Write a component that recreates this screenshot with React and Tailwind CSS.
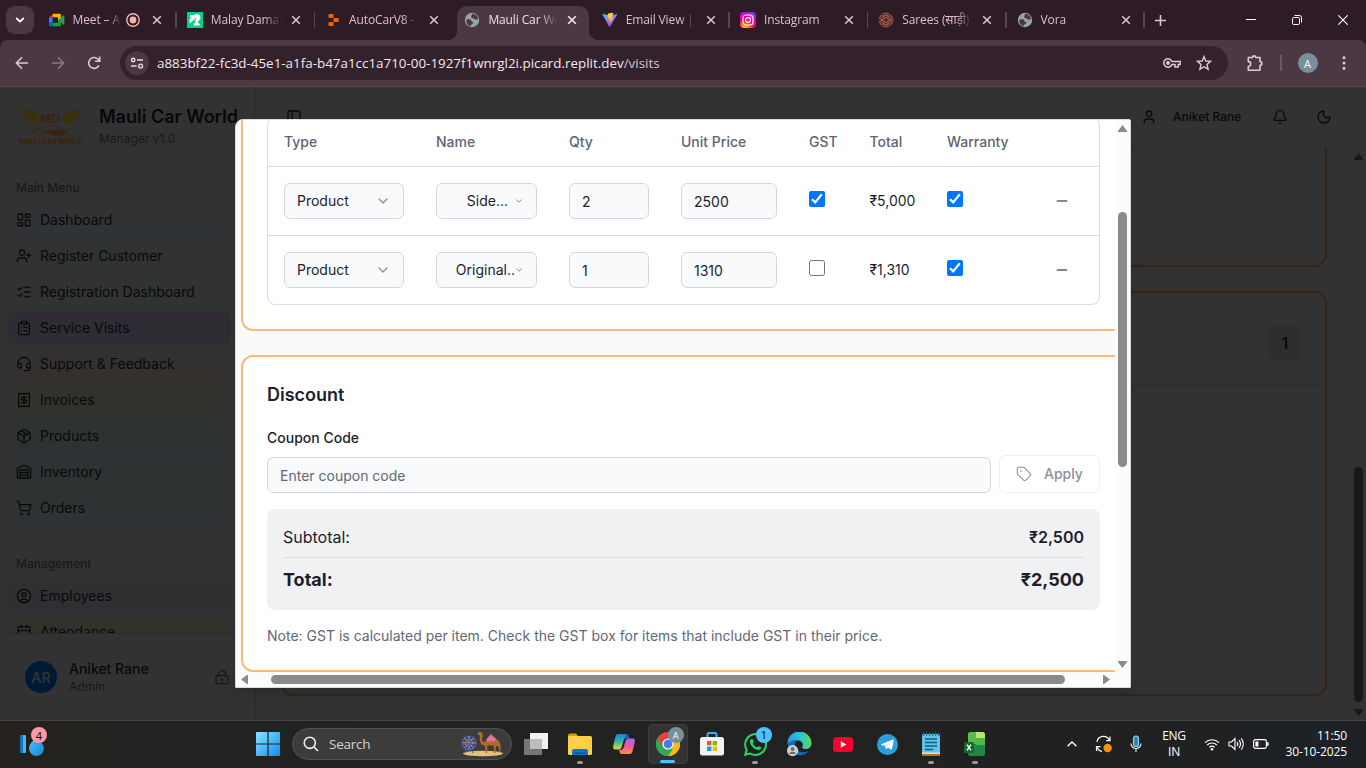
import React from "react";
import {
  LayoutDashboard, UserPlus, ListChecks, ClipboardList, Headset, Receipt, Package, Warehouse,
  ShoppingCart, CircleUser, Calendar, LockKeyhole, PanelLeft, User, Bell, Moon, Tag, ChevronDown, Minus,
} from "lucide-react";

/* ---------- browser chrome ---------- */

const MeetIcon = () => (
  <svg width="16" height="16" viewBox="0 0 16 16">
    <path d="M0 5.5L4 1.8V5.5Z" fill="#ea4335" />
    <path d="M0 5.5H3.6V10.8H0Z" fill="#2684fc" />
    <path d="M0 10.8H3.6V14.2H1.2A1.2 1.2 0 0 1 0 13Z" fill="#0066da" />
    <path d="M4 1.8H10.6A1.2 1.2 0 0 1 11.8 3V6.3L9 8.6V5.3H4Z" fill="#ffba00" />
    <path d="M3.6 10.8H9V8L11.8 10V13A1.2 1.2 0 0 1 10.6 14.2H3.6Z" fill="#00ac47" />
    <path d="M9 8L14.2 3.5C14.9 3 15.4 3.3 15.4 4V12C15.4 12.8 14.8 13 14.2 12.5Z" fill="#2e9e4c" />
  </svg>
);
const MalayIcon = () => (
  <svg width="16" height="16" viewBox="0 0 16 16">
    <rect width="16" height="16" fill="#08cf87" />
    <path d="M3 3H7.4A3.6 3.6 0 1 1 10.4 9.2L13.4 13.6H6.2L8.6 9.4L7 8L2.6 11.4V7.2L5 5.6H3Z" fill="#fff" />
    <path d="M5.2 8.6L8.6 6.2L8.4 9.6" stroke="#08cf87" strokeWidth=".7" fill="none" />
  </svg>
);
const ReplitIcon = () => (
  <svg width="16" height="16" viewBox="0 0 16 16" fill="#f26207">
    <rect x="3.500" y="2" width="5" height="4" rx=".8" />
    <rect x="8.500" y="6" width="5.200" height="4" rx=".8" />
    <rect x="3.500" y="10" width="5" height="4" rx=".8" />
  </svg>
);
const GlobeIcon = () => (
  <svg width="16" height="16" viewBox="0 0 16 16">
    <circle cx="8" cy="8" r="7.2" fill="#9aa3a9" />
    <path d="M2.5 7.2C4 8 4.8 6.9 6.4 7.6C7.6 8.2 7 9.8 8.6 9.9C9.8 10 9.4 11.6 8.2 12C7 12.4 6.8 13.6 6.6 14.2C3.6 13.4 1.8 10.6 2.5 7.2ZM8 1.8C7.2 3 8.2 3.6 7.4 4.6C6.8 5.4 7.6 6.4 9 6.2C10.4 6 10.4 7.6 12 7.6C13.2 7.6 13.6 7 14 7.6C14.2 4.4 11.4 1.8 8 1.8Z" fill="#4b3842" />
  </svg>
);
const ViteIcon = () => (
  <svg width="17" height="16" viewBox="0 0 17 16">
    <defs>
      <linearGradient id="vt" x1="0" y1="0" x2=".6" y2="1"><stop stopColor="#41d1ff" /><stop offset="1" stopColor="#bd34fe" /></linearGradient>
      <linearGradient id="vb" x1="0" y1="0" x2="0" y2="1"><stop stopColor="#ffdd35" /><stop offset="1" stopColor="#ffa800" /></linearGradient>
    </defs>
    <path d="M.3 1.5L8 15.6L16.6 1.5L8.6 3Z" fill="url(#vt)" />
    <path d="M12 .2L6.5 1.2L6 6.5L8 6.2L7.4 9L9 8.6L8.5 11.8L12.2 5.2L10.4 5.5Z" fill="url(#vb)" />
  </svg>
);
const InstaIcon = () => (
  <svg width="16" height="16" viewBox="0 0 16 16">
    <defs>
      <radialGradient id="ig" cx=".3" cy="1.05" r="1.1"><stop stopColor="#ffd600" /><stop offset=".25" stopColor="#ff7a00" /><stop offset=".5" stopColor="#ff0169" /><stop offset=".8" stopColor="#d300c5" /><stop offset="1" stopColor="#7638fa" /></radialGradient>
    </defs>
    <rect width="16" height="16" rx="4" fill="url(#ig)" />
    <rect x="3" y="3" width="10" height="10" rx="3" fill="none" stroke="#fff" strokeWidth="1.2" />
    <circle cx="8" cy="8" r="2.4" fill="none" stroke="#fff" strokeWidth="1.2" />
    <circle cx="10.9" cy="5.1" r=".7" fill="#fff" />
  </svg>
);
const SareeIcon = () => (
  <svg width="17" height="16" viewBox="0 0 16 16" fill="none" stroke="#b05a4c" strokeWidth="1">
    <circle cx="8" cy="8" r="2.1" /><circle cx="8" cy="3.4" r="2" /><circle cx="8" cy="12.6" r="2" />
    <circle cx="4" cy="5.7" r="2" /><circle cx="12" cy="5.7" r="2" /><circle cx="4" cy="10.3" r="2" /><circle cx="12" cy="10.3" r="2" />
    <circle cx="8" cy="8" r="7" strokeDasharray="2 1.2" /><circle cx="8" cy="8" r="4.6" />
  </svg>
);

const Cross = ({ c }) => (
  <svg width="10" height="10" viewBox="0 0 10 10" stroke={c} strokeWidth="1.6"><path d="M1.2 1.2L8.8 8.8M8.8 1.2L1.2 8.8" /></svg>
);

const tabs = [
  { t: "Meet – Aniket", icon: <MeetIcon />, rec: true, sep: true },
  { t: "Malay Damani", icon: <MalayIcon />, sep: true },
  { t: "AutoCarV8 - Replit", icon: <ReplitIcon /> },
  { t: "Mauli Car World", icon: <GlobeIcon />, active: true },
  { t: "Email View |", icon: <ViteIcon />, sep: true },
  { t: "Instagram", icon: <InstaIcon />, sep: true },
  { t: "Sarees (साड़ी) -", icon: <SareeIcon />, sep: true },
  { t: "Vora", icon: <GlobeIcon />, sep: true },
];

function Tab({ tab }) {
  return (
    <div className="relative flex h-full w-[138.3px] shrink-0 items-center pl-[10px]">
      {tab.active && (
        <div className="absolute top-[6px] bottom-0 left-[4px] w-[132px] rounded-t-[10px] bg-[#4b3842]">
          <div className="absolute bottom-0 -left-[10px] size-[10px] bg-[radial-gradient(circle_at_0_0,#2d1b26_10px,#4b3842_10.5px)]" />
          <div className="absolute -right-[10px] bottom-0 size-[10px] bg-[radial-gradient(circle_at_100%_0,#2d1b26_10px,#4b3842_10.5px)]" />
        </div>
      )}
      <div className={`relative flex w-4 shrink-0 justify-center ${tab.active ? "left-px" : ""}`}>{tab.icon}</div>
      <div className={`relative ml-2 shrink-0 overflow-hidden whitespace-nowrap text-[12px] leading-4 tracking-[-0.12px] [mask-image:linear-gradient(90deg,#000_76%,transparent)] ${tab.rec ? "w-[48px]" : "w-[70px]"} ${tab.active ? "pl-px text-[#efdfe8]" : "text-[#dfbfd0]"}`}>
        {tab.t}
      </div>
      {tab.rec && (
        <svg className="ml-[5px] shrink-0" width="14" height="14" viewBox="0 0 14 14"><circle cx="7" cy="7" r="6.2" fill="none" stroke="#f7b4ac" strokeWidth="1.4" /><circle cx="7" cy="7" r="3.4" fill="#f7b4ac" /></svg>
      )}
      <div className={`relative shrink-0 ${tab.rec ? "ml-[12px]" : "ml-[10px]"}`}><Cross c={tab.active ? "#f5e6ee" : "#dfbfd0"} /></div>
      {tab.sep && <div className="ml-auto h-4 w-[1.5px] bg-[#5a4450]" />}
    </div>
  );
}

function TabStrip() {
  return (
    <div className="flex h-10 shrink-0 items-center bg-[#2d1b26] pl-[6px]">
      <div className="mr-[4.5px] flex size-7 shrink-0 items-center justify-center rounded-[9px] bg-[#4b3842]">
        <svg width="10" height="6" viewBox="0 0 10 6" fill="none" stroke="#fff" strokeWidth="1.8"><path d="M1.2 1L5 4.6L8.8 1" /></svg>
      </div>
      {tabs.map((t) => <Tab key={t.t} tab={t} />)}
      <svg className="ml-[10px] shrink-0" width="11" height="11" viewBox="0 0 11 11" stroke="#dfbfd0" strokeWidth="1.6"><path d="M5.5 0V11M0 5.5H11" /></svg>
      <div className="ml-auto flex items-center gap-[36px] pr-[18px]">
        <svg width="10" height="10" viewBox="0 0 10 10" stroke="#fff"><path d="M0 4.5H10" /></svg>
        <svg width="10" height="10" viewBox="0 0 10 10" fill="none" stroke="#fff"><rect x=".5" y="2.5" width="7" height="7" rx="1.2" /><path d="M2.5 .5H7.5A2 2 0 0 1 9.5 2.5V7.5" /></svg>
        <svg width="10" height="10" viewBox="0 0 10 10" stroke="#fff" strokeWidth="1.1"><path d="M.3 .3L9.7 9.7M9.7 .3L.3 9.7" /></svg>
      </div>
    </div>
  );
}

function Toolbar() {
  return (
    <div className="flex h-[47px] shrink-0 items-start bg-[#2d1b26]">
      <div className="flex h-[47px] w-full items-center rounded-t-[8px] border-b border-[#5a474f] bg-[#4b3842] pl-[15px]">
        <svg width="14" height="14" viewBox="0 0 14 14" fill="none" stroke="#e3c6d5" strokeWidth="1.5"><path d="M13 7H1.5M7 1.3L1.4 7L7 12.7" /></svg>
        <svg className="ml-[22px]" width="14" height="14" viewBox="0 0 14 14" fill="none" stroke="#8d7582" strokeWidth="1.5"><path d="M1 7H12.5M7 1.3L12.6 7L7 12.7" /></svg>
        <svg className="ml-[22px]" width="14" height="14" viewBox="0 0 14 14" fill="none" stroke="#e3c6d5" strokeWidth="1.6"><path d="M11.9 9.3A5.4 5.4 0 1 1 11.3 3.6L12.4 4.9M12.7 .6V5.2H8.1" /></svg>
        <div className="ml-[19px] flex h-[34px] w-[1108px] items-center rounded-full bg-[#33212c] pl-[5px]">
          <div className="flex size-6 items-center justify-center rounded-full bg-[#4b3842]">
            <svg width="14" height="14" viewBox="0 0 14 14" fill="none" stroke="#ecdde5" strokeWidth="1.4"><circle cx="3.2" cy="4" r="1.7" /><path d="M7 4H13M1 10H6.6" /><circle cx="10.6" cy="10" r="1.9" /></svg>
          </div>
          <div className="ml-2 w-[520px] whitespace-nowrap text-[13.4px] leading-5 text-[#f3e8ee]">
            a883bf22-fc3d-45e1-a1fa-b47a1cc1a710-00-1927f1wnrgl2i.picard.replit.dev<span className="text-[#d9c7d0]">/visits</span>
          </div>
          <svg className="ml-auto" width="18" height="10" viewBox="0 0 18 10" fill="none" stroke="#dccbd4" strokeWidth="1.5"><path d="M8.9 3.6A4.2 4.2 0 1 0 8.9 6.4H12V9H15.2V6.4H17.2V3.6Z" /><circle cx="5" cy="5" r="1.2" fill="#dccbd4" /></svg>
          <svg className="mr-4 ml-[15px]" width="16" height="16" viewBox="0 0 16 16" fill="none" stroke="#dccbd4" strokeWidth="1.4"><path d="M8 1.6L9.8 6L14.6 6.4L11 9.5L12.1 14.2L8 11.7L3.9 14.2L5 9.5L1.4 6.4L6.2 6Z" /></svg>
        </div>
        <svg className="ml-[18px]" width="18" height="17" viewBox="0 0 18 17" fill="none" stroke="#e3c6d5" strokeWidth="1.6"><path d="M2.300 2.500H6.500A1.300 1.300 0 0 1 9.700 2.500H14V6.600A1.600 1.600 0 0 1 14 10.200V15.200H2.300V11.500A2.400 2.400 0 0 0 2.300 6.600Z" strokeLinejoin="round" /></svg>
        <div className="ml-[16px] h-4 w-[1.5px] bg-[#6e5663]" />
        <div className="ml-4 flex size-5 items-center justify-center rounded-full bg-[#78909c] text-[11px] leading-none text-white">A</div>
        <svg className="ml-[24px]" width="4" height="14" viewBox="0 0 4 14" fill="#e3c6d5"><circle cx="2" cy="1.7" r="1.5" /><circle cx="2" cy="7" r="1.5" /><circle cx="2" cy="12.3" r="1.5" /></svg>
      </div>
    </div>
  );
}

/* ---------- dimmed application ---------- */

const mainMenu = [
  { t: "Dashboard", I: LayoutDashboard, bg: "bg-[#313234]" },
  { t: "Register Customer", I: UserPlus, bg: "bg-[#303331]" },
  { t: "Registration Dashboard", I: ListChecks, bg: "bg-[#303332]" },
  { t: "Service Visits", I: ClipboardList, bg: "bg-[#2f2c33]" },
  { t: "Support & Feedback", I: Headset, bg: "bg-[#33312f]" },
  { t: "Invoices", I: Receipt, bg: "bg-[#33312e]" },
  { t: "Products", I: Package, bg: "bg-[#2e3233]" },
  { t: "Inventory", I: Warehouse, bg: "bg-[#2e3233]" },
  { t: "Orders", I: ShoppingCart, bg: "bg-[#2e3233]" },
];
const management = [
  { t: "Employees", I: CircleUser, bg: "bg-[#303033]" },
  { t: "Attendance", I: Calendar, bg: "bg-[#33312c]" },
];

function MenuGroup({ title, items }) {
  return (
    <div className="flex flex-col p-2">
      <div className="flex h-8 items-center px-2 text-[12px] leading-4 font-medium text-[#17181b]">{title}</div>
      <div className="flex flex-col gap-1">
        {items.map(({ t, I, bg }) => (
          <div key={t} className={`flex h-8 items-center gap-2 rounded-md px-2 text-[14px] leading-5 text-[#08090b] ${bg}`}>
            <I size={16} strokeWidth={1.9} className="shrink-0" />
            <span>{t}</span>
          </div>
        ))}
      </div>
    </div>
  );
}

function Logo() {
  return (
    <svg width="70" height="46" viewBox="0 0 70 46">
      <g fill="#3c2f0a">
        <path d="M1 3C7 9 14 8 20 11C23 13 24 16 23 18C14 16 5 11 1 3Z" />
        <path d="M5 11.500C10 15.500 17 17.500 23 18.700L22 20.500C15 20.500 9 17.500 5 11.500Z" />
        <path d="M10 18.500C14 20.500 18 21.500 22 21.500L21 23.500C16 23.500 13 21.500 10 18.500Z" />
        <path d="M69 3C63 9 56 8 50 11C47 13 46 16 47 18C56 16 65 11 69 3Z" />
        <path d="M65 11.500C60 15.500 53 17.500 47 18.700L48 20.500C55 20.500 61 17.500 65 11.500Z" />
        <path d="M60 18.500C56 20.500 52 21.500 48 21.500L49 23.500C54 23.500 57 21.500 60 18.500Z" />
      </g>
      <path d="M2 5C9 10 16 9.500 22 14.500M68 5C61 10 54 9.500 48 14.500" stroke="#322c1c" strokeWidth=".8" fill="none" />
      <text x="34" y="20.500" textAnchor="middle" fontFamily="Inter, sans-serif" fontSize="12" fontWeight="600" fill="#3a2110" textLength="20">MD</text>
      <path d="M30 29C34 27 44 27 50 29.500L51 32L45 33.500H38C35 31 32 30 30 29Z" fill="#3a220f" />
      <path d="M16 29.500C18 27 24 27 27 25C34 23 42 24 46 27L52 30M16 29.500C22 30 30 29 36 33H46" stroke="#3a220f" strokeWidth=".9" fill="none" />
      <circle cx="24" cy="31.500" r="2.400" fill="none" stroke="#38300f" strokeWidth="1.200" />
      <circle cx="50" cy="31.500" r="2" fill="none" stroke="#38300f" strokeWidth="1.200" />
      <text x="35" y="41.500" textAnchor="middle" fontFamily="Inter, sans-serif" fontSize="7.400" fontWeight="800" fill="#3d220d" textLength="64" lengthAdjust="spacingAndGlyphs">MAULI CAR WORLD</text>
    </svg>
  );
}

function Sidebar() {
  return (
    <div className="flex w-[256px] shrink-0 flex-col border-r border-[#2d2d2e] bg-[#323232]">
      <div className="flex h-[77px] shrink-0 items-start border-b border-[#2c2c2d] pt-[15px] pl-4">
        <Logo />
        <div className="pt-[1px] pl-[13px]">
          <div className="text-[18px] leading-7 font-semibold whitespace-nowrap text-[#07080a]">Mauli Car World</div>
          <div className="text-[12px] leading-4 text-[#17181b]">Manager v1.0</div>
        </div>
      </div>
      <div className="flex min-h-0 flex-1 flex-col overflow-hidden pr-4">
        <MenuGroup title="Main Menu" items={mainMenu} />
        <div className="pt-2"><MenuGroup title="Management" items={management} /></div>
      </div>
      <div className="flex h-[87px] shrink-0 items-center border-t border-[#2c2c2d] pl-[25px]">
        <div className="flex size-8 items-center justify-center rounded-full bg-[#001a36] text-[14px] font-semibold text-[#2f3338]">AR</div>
        <div className="ml-3">
          <div className="text-[14px] leading-5 font-medium text-[#08090b]">Aniket Rane</div>
          <div className="text-[12px] leading-4 text-[#17181b]">Admin</div>
        </div>
        <LockKeyhole size={16} strokeWidth={1.8} className="ml-[65px] text-[#17181b]" />
      </div>
    </div>
  );
}

function AppMain() {
  return (
    <div className="flex min-w-0 flex-1 flex-col bg-[#323232]">
      <div className="flex h-[61px] shrink-0 items-center border-b border-[#2c2c2d] pl-[30px] text-[#08090b]">
        <PanelLeft size={16} />
        <User size={16} className="ml-[839px]" />
        <span className="ml-4 text-[12px] leading-4 font-medium">Aniket Rane</span>
        <div className="ml-auto flex gap-7 pr-[34px]"><Bell size={16} /><Moon size={16} /></div>
      </div>
      <div className="flex min-h-0 flex-1">
        <div className="flex min-w-0 flex-1 flex-col pr-6 pl-[25px]">
          <div className="h-[119px] shrink-0 rounded-b-[12px] border-2 border-t-0 border-[#352316]" />
          <div className="mt-6 flex h-[405px] shrink-0 flex-col rounded-[12px] border-2 border-[#352316]">
            <div className="flex h-[93px] shrink-0 items-center justify-end border-b border-[#2b2b2c] pt-2 pr-6">
              <div className="flex h-[34px] w-[33px] items-center justify-center rounded-md bg-[#2e2e2f] pl-px text-[16px] font-semibold text-[#08090d]">1</div>
            </div>
          </div>
        </div>
        <div className="flex w-[15px] shrink-0 flex-col items-center pt-[5px]">
          <svg width="9" height="7" viewBox="0 0 9 7" fill="#191919"><path d="M4.5 0L9 6V7H0V6Z" /></svg>
          <div className="mt-[307px] h-[235px] w-[9px] rounded-full bg-[#191919]" />
          <svg className="mt-[7px]" width="9" height="7" viewBox="0 0 9 7" fill="#191919"><path d="M4.5 7L9 1V0H0V1Z" /></svg>
        </div>
      </div>
    </div>
  );
}

/* ---------- dialog ---------- */

const cols = "grid grid-cols-[152px_133px_112px_128px_60.5px_77.5px_1fr_76px]";

function Check({ on }) {
  return on ? (
    <div className="mb-1 flex size-4 items-center justify-center rounded-[2px] bg-[#0075ff]">
      <svg width="16" height="16" viewBox="0 0 16 16" fill="none" stroke="#fff" strokeWidth="2.2"><path d="M3 8.3L6.2 11.4L12.8 3.2" /></svg>
    </div>
  ) : (
    <div className="mb-1 size-4 rounded-[2.5px] border border-[#767676] bg-white" />
  );
}

const field = "flex h-9 items-center rounded-md border border-[#d5d7dc] bg-[#f9fafb] leading-5";

function Row({ name, qty, price, gst, total, border, tight }) {
  return (
    <div className={`${cols} items-center ${border ? "h-[69px] border-b border-[#dcdde0]" : "h-[68px]"}`}>
      <div className="pl-4"><div className={`${field} w-[120px] justify-between px-3`}>Product<ChevronDown size={16} strokeWidth={1.9} className="text-[#8b8d92]" /></div></div>
      <div className="pl-4">
        <div className={`${field} w-[101px] justify-end pr-3 whitespace-nowrap`}>
          {name}<ChevronDown size={10} strokeWidth={2.4} className={`text-[#8b8d92] ${tight ? "-ml-px" : "ml-[6px]"}`} />
        </div>
      </div>
      <div className="pl-4"><div className={`${field} w-20 px-3 pt-px`}>{qty}</div></div>
      <div className="pl-4"><div className={`${field} w-24 px-3 pt-px`}>{price}</div></div>
      <div className="pl-4"><Check on={gst} /></div>
      <div className="pl-4">{total}</div>
      <div className="pl-4"><Check on /></div>
      <div className="flex pl-[31px]"><Minus size={16} strokeWidth={2.4} className="text-[#606268]" /></div>
    </div>
  );
}

function Dialog() {
  return (
    <div className="absolute top-8 left-[235px] flex h-[569px] w-[896px] flex-col overflow-hidden rounded-tl-[8px] rounded-tr-[2px] rounded-b-[1px] border border-[#d9dadd] bg-[#f8fafc] text-[#1c1f2b] shadow-lg">
      <div className="flex min-h-0 flex-1">
        <div className="flex min-w-0 flex-1 flex-col justify-end overflow-hidden pl-[5px]">
          <div className="w-[885px] shrink-0 rounded-[12px] border-2 border-[#fdba74] bg-white p-6">
            <div className="overflow-hidden rounded-lg border border-[#dcdde0] text-[14px] leading-5">
              <div className={`${cols} h-[49px] items-center border-b border-[#dcdde0] font-medium text-[#5f6472] [&>div]:pl-4`}>
                <div>Type</div><div>Name</div><div>Qty</div><div>Unit Price</div><div>GST</div><div>Total</div><div>Warranty</div><div />
              </div>
              <Row name="Side..." qty="2" price="2500" gst total="₹5,000" border />
              <Row name="Original.." qty="1" price="1310" total="₹1,310" tight />
            </div>
          </div>
          <div className="mt-6 w-[885px] shrink-0 rounded-[12px] border-2 border-[#fdba74] bg-white p-6">
            <div className="text-[18px] leading-7 font-semibold">Discount</div>
            <div className="mt-[19px] text-[14px] leading-5 font-medium">Coupon Code</div>
            <div className="mt-[7px] flex items-end gap-2">
              <div className={`${field} flex-1 px-3 pt-px text-[14px] text-[#626775]`}>Enter coupon code</div>
              <div className="flex h-[38px] w-[101px] items-center rounded-md border border-[#f0f0f1] pl-4 text-[14px] leading-5 font-medium text-[#8f9095]">
                <Tag size={16} strokeWidth={1.6} /><span className="ml-3">Apply</span>
              </div>
            </div>
            <div className="mt-4 rounded-lg bg-[#f0f1f3] p-4">
              <div className="flex justify-between pb-2 text-[16px] leading-6"><span>Subtotal:</span><span className="font-semibold">₹2,500</span></div>
              <div className="flex justify-between border-t border-[#dcdde0] pt-2 text-[18px] leading-7 font-bold"><span>Total:</span><span>₹2,500</span></div>
            </div>
            <div className="mt-4 text-[14px] leading-5 text-[#626775]">Note: GST is calculated per item. Check the GST box for items that include GST in their price.</div>
          </div>
        </div>
        <div className="flex w-[15px] shrink-0 flex-col items-center bg-[#fcfcfc] pt-[5px]">
          <svg width="9" height="7" viewBox="0 0 9 7" fill="#8b8b8b"><path d="M4.5 0L9 6V7H0V6Z" /></svg>
          <div className="mt-20 h-[255px] w-[9px] rounded-full bg-[#8b8b8b]" />
          <svg className="mt-auto mb-1" width="9" height="7" viewBox="0 0 9 7" fill="#8b8b8b"><path d="M4.5 7L9 1V0H0V1Z" /></svg>
        </div>
      </div>
      <div className="flex h-[15px] shrink-0 items-center bg-[#fcfcfc] pl-[5px]">
        <svg width="7" height="9" viewBox="0 0 7 9" fill="#8b8b8b"><path d="M0 4.5L6 0H7V9H6Z" /></svg>
        <div className="ml-[23px] h-[9px] w-[794px] rounded-full bg-[#8b8b8b]" />
        <svg className="ml-[38px]" width="7" height="9" viewBox="0 0 7 9" fill="#8b8b8b"><path d="M7 4.5L1 0H0V9H1Z" /></svg>
      </div>
    </div>
  );
}

/* ---------- taskbar ---------- */

const Cell = ({ children, dot, on }) => (
  <div className="relative flex h-10 w-[43.9px] shrink-0 items-center justify-center">
    {on && <div className="absolute inset-x-[2px] inset-y-0 rounded-[4px] border border-[#3c3b3a] bg-[#343332]" />}
    <div className="relative">{children}</div>
    {dot && <div className="absolute bottom-0 h-[3px] w-[6px] rounded-full bg-[#9a9a9a]" />}
    {on && <div className="absolute bottom-[1px] h-[3px] w-[15px] rounded-full bg-[#4cc2ff]" />}
  </div>
);

function Taskbar() {
  return (
    <div className="flex h-12 shrink-0 items-center border-t border-[#454443] bg-[linear-gradient(90deg,#25221c,#222222_12%,#212121_80%,#1d2126)] pb-px text-white">
      <div className="w-[235px] shrink-0 pl-[19px]">
        <div className="relative h-[34px] w-7">
          <svg width="28" height="34" viewBox="0 0 28 34">
            <defs><linearGradient id="th" x1="0" y1="0" x2="1" y2="1"><stop stopColor="#52c6f7" /><stop offset="1" stopColor="#0f86d8" /></linearGradient></defs>
            <rect x="1" y="8" width="6" height="18" rx="1" fill="#43b8f5" /><rect x="1" y="8" width="3" height="18" fill="#1273b8" />
            <path d="M17 10C20 14 25 17 25 21.500A7.500 7.500 0 0 1 10 21.500C10 17 14 14 17 10Z" fill="url(#th)" />
          </svg>
          <div className="absolute top-0 left-[12px] flex size-4 items-center justify-center rounded-full bg-[#ff99a4] text-[11px] leading-none text-black">4</div>
        </div>
      </div>
      <svg className="ml-[20.5px] shrink-0" width="24" height="24" viewBox="0 0 24 24">
        <defs><linearGradient id="win" x1="0" y1="0" x2="1" y2="1"><stop stopColor="#8be3ff" /><stop offset="1" stopColor="#0a8ef0" /></linearGradient></defs>
        <path d="M0 1A1 1 0 0 1 1 0H11.4V11.4H0ZM12.6 0H23A1 1 0 0 1 24 1V11.4H12.6ZM0 12.6H11.4V24H1A1 1 0 0 1 0 23ZM12.6 12.6H24V23A1 1 0 0 1 23 24H12.6Z" fill="url(#win)" />
      </svg>
      <div className="ml-[12.5px] flex h-8 w-[220px] shrink-0 items-center rounded-full border border-[#535251] bg-[#3d3c3b] pl-[10px]">
        <svg width="16" height="16" viewBox="0 0 16 16" fill="none" stroke="#f0f0f0" strokeWidth="1.6"><circle cx="6.8" cy="6.8" r="5.6" /><path d="M10.8 10.8L15 15" /></svg>
        <span className="ml-[10px] text-[13.5px] leading-5 tracking-[-0.25px] text-[#d2d2d2]">Search</span>
        <svg className="mr-[7px] ml-auto" width="43" height="26" viewBox="0 0 43 26">
          <ellipse cx="22" cy="22.5" rx="20" ry="2.8" fill="#e7c078" />
          <g fill="none"><circle cx="8" cy="12" r="6.6" stroke="#4a6fd0" strokeWidth="2" strokeDasharray="1.6 1" /><circle cx="8" cy="12" r="3.8" stroke="#e85a6c" strokeWidth="1.8" strokeDasharray="1.4 1" /><path d="M8 5V19M1 12H15M3 7L13 17M13 7L3 17" stroke="#7fb1ee" strokeWidth=".7" /><path d="M8 12L4 22M8 12L12 22" stroke="#3d5bb0" /></g>
          <path d="M16.5 3.5L18 .8L21 1.5L21.600 4L21 10L24 11L26.500 7L30 3.500L34 7L38 10L39.500 14V21L38.500 22L37.500 15.500L35 14.800L34.400 22H33.200L32.600 14.500L26.500 14.500L26 22H24.600L24 15L20 13L18.700 9L18.800 4.500Z" fill="#b06a2c" />
          <path d="M25.5 8L30 3.200L35 8L33 10.500H26.500Z" fill="#e2718a" /><path d="M26 8.500L34.500 8.500" stroke="#58c4c4" />
        </svg>
      </div>
      <div className="ml-[2px] flex shrink-0">
        <Cell><svg width="24" height="23" viewBox="0 0 24 23"><rect x="6" y="0" width="18" height="16" fill="#f2f2f2" /><rect x="0" y="6" width="18" height="16" fill="#858585" opacity=".85" /><rect x="6" y="6" width="12" height="10" fill="#bdbdbd" /></svg></Cell>
        <Cell dot><svg width="26" height="24" viewBox="0 0 26 24"><path d="M1 3.5A2 2 0 0 1 3 1.5H9L11 4V7H1Z" fill="#d99a06" /><rect x="1" y="4" width="24" height="19" rx="1.5" fill="#ffcf48" /><path d="M5 23V19A2 2 0 0 1 7 17H19A2 2 0 0 1 21 19V23Z" fill="#1173c6" /><rect x="8" y="20.5" width="10" height="1.4" fill="#0a4f94" /></svg></Cell>
        <Cell><svg width="24" height="22" viewBox="0 0 24 22">
          <defs><linearGradient id="cp1" x1="0" y1="0" x2="0" y2="1"><stop stopColor="#1b7fe0" /><stop offset=".5" stopColor="#2bbd9b" /><stop offset="1" stopColor="#f4cf3a" /></linearGradient><linearGradient id="cp2" x1="0" y1="0" x2="0" y2="1"><stop stopColor="#9a6bf5" /><stop offset=".5" stopColor="#ee5a9a" /><stop offset="1" stopColor="#ff8a4a" /></linearGradient></defs>
          <path d="M6 1H14C16 1 16.6 3 17 5H14C12.5 5 12 6 11.6 7.4L9.8 14C9.3 15.6 8.4 16.4 6.6 16.4H3C1 16.4 .8 14 1.4 12L3.4 4C4 2 4.6 1 6 1Z" fill="url(#cp1)" />
          <path d="M18 21H10C8 21 7.4 19 7 17C9 17 11 16.4 11.6 14.4L13.6 7.6C14.2 5.8 15 5.4 17 5.4H21C23 5.4 23.2 8 22.6 10L20.6 18C20 20 19.4 21 18 21Z" fill="url(#cp2)" />
          <path d="M14 1C16 1 16.6 3 17 5.4H14.4C13 5.4 12.4 6 12 7.4Z" fill="#2456c8" />
        </svg></Cell>
        <Cell on>
          <svg width="24" height="24" viewBox="0 0 24 24"><path d="M12 12L1.6 6A12 12 0 0 1 22.4 6Z" fill="#e94235" /><path d="M12 12L22.4 6A12 12 0 0 1 12 24Z" fill="#fbbc04" /><path d="M12 12V24A12 12 0 0 1 1.6 6Z" fill="#34a853" /><path d="M6.8 15L1.6 6H12V12Z" fill="#e94235" /><path d="M12 6.6H22.7A12 12 0 0 1 12 24L17.2 15Z" fill="#fbbc04" /><path d="M12 17.4L17 15L12 24L6 15Z" fill="#34a853" /><path d="M1.6 6L6.9 15L10 17H16.8L12 24A12 12 0 0 1 1.6 6Z" fill="#34a853" /><circle cx="12" cy="12" r="5.6" fill="#fff" /><circle cx="12" cy="12" r="4.4" fill="#3f7ff0" /></svg>
          <div className="absolute -top-[5px] -right-[4px] flex size-4 items-center justify-center rounded-full bg-[#78909c] text-[9px] leading-none">A</div>
        </Cell>
        <Cell><svg width="24" height="24" viewBox="0 0 24 24"><path d="M7.5 6V2.5A1.5 1.5 0 0 1 9 1H15A1.5 1.5 0 0 1 16.5 2.5V6" fill="none" stroke="#35b3ee" strokeWidth="2" /><rect x="0" y="5" width="24" height="18.5" rx="2.5" fill="#f3f3f3" /><path d="M7 9H11.4V13.4H7Z" fill="#f35325" /><path d="M12.6 9H17V13.4H12.6Z" fill="#81bc06" /><path d="M7 14.6H11.4V19H7Z" fill="#05a6f0" /><path d="M12.6 14.6H17V19H12.6Z" fill="#ffba08" /></svg></Cell>
        <Cell dot>
          <svg width="25" height="25" viewBox="0 0 24 24" fill="#25d366"><path d="M12 1A11 11 0 0 0 2.4 17.3L.8 23.2L6.8 21.7A11 11 0 1 0 12 1ZM12 3A9 9 0 1 1 7.2 19.6L3.6 20.5L4.6 17.1A9 9 0 0 1 12 3Z" /><path d="M8.3 6.6C7.6 6.8 6.5 7.8 6.6 9.4C6.8 12.8 10.8 17 14.6 17.3C16.2 17.4 17.4 16.5 17.5 15.2C17.5 14.7 15.4 13.6 15 13.7C14.5 13.8 14.1 15 13.6 14.9C12 14.5 9.8 12.5 9.3 10.9C9.2 10.4 10.2 9.9 10.2 9.2C10.1 8.6 9.3 6.6 8.9 6.5Z" /></svg>
          <div className="absolute -top-[5px] -right-[4px] flex size-4 items-center justify-center rounded-full bg-[#4cc2ff] text-[11px] leading-none text-black">1</div>
        </Cell>
        <Cell><svg width="25" height="25" viewBox="0 0 25 25">
          <defs><linearGradient id="ed" x1="0" y1=".3" x2="1" y2=".3"><stop stopColor="#1fa0e0" /><stop offset=".55" stopColor="#2fc4d8" /><stop offset="1" stopColor="#5fd94b" /></linearGradient></defs>
          <path d="M.5 12A12 12 0 0 1 24.5 11C24.5 15 21.6 17 18.6 17C15.6 17 14.6 15.6 15.4 14.4C17 11.6 14.6 8.4 10.6 8.4C6 8.4 1.6 11 .5 12Z" fill="url(#ed)" />
          <path d="M.5 12C2 9.6 6 7.6 10.4 8.4C8 9.6 7 13 8.4 16C10 19.6 15 21.6 21.6 19A12 12 0 0 1 .5 12Z" fill="#1668b8" />
          <circle cx="5.6" cy="18.6" r="5.6" fill="#cfcfcf" /><circle cx="5.6" cy="17" r="2" fill="#6a6a6a" /><path d="M2 22A3.8 3.4 0 0 1 9.2 22Z" fill="#6a6a6a" />
        </svg></Cell>
        <Cell><svg width="20" height="15" viewBox="0 0 20 15"><rect width="20" height="15" rx="3.5" fill="#f5002f" /><path d="M7.8 4.3V10.7L13.4 7.5Z" fill="#fff" /></svg></Cell>
        <Cell><svg width="21" height="21" viewBox="0 0 21 21"><circle cx="10.5" cy="10.5" r="10.5" fill="#2a9fdc" /><path d="M4.2 10.3L16 5.6C16.6 5.4 16.9 5.8 16.8 6.4L14.9 15.2C14.8 15.8 14.3 15.9 13.8 15.6L11 13.5L9.6 15C9.2 15.3 8.9 15.2 8.8 14.7L8 12L4.4 10.9C3.9 10.8 3.9 10.4 4.2 10.3Z" fill="#fff" /><path d="M8.2 12L14 7.8L9.6 12.6L9 15" fill="#b8d9ee" /></svg></Cell>
        <Cell dot><svg width="22" height="25" viewBox="0 0 22 25"><rect x="2" y="2" width="18" height="22" rx="1.5" fill="#62c4e4" /><path d="M2 21H20V23A1 1 0 0 1 19 24H3A1 1 0 0 1 2 23Z" fill="#c76b1c" /><rect x="2" y="20.6" width="18" height="1.2" fill="#f4f4f4" /><path d="M5 7H17M5 10.5H17M5 14H17M5 17.4H13" stroke="#0c5d8c" strokeWidth="1.5" /><path d="M3.500 .5V4M6.500 .5V4M9.500 .5V4M12.500 .5V4M15.500 .5V4M18.500 .5V4" stroke="#15779f" strokeWidth="1.2" /></svg></Cell>
        <Cell dot><svg width="22" height="24" viewBox="0 0 22 24"><rect x="4" y="0" width="17" height="24" rx="2.5" fill="#1f8a43" /><path d="M4 2.500A2.500 2.500 0 0 1 6.500 0H12V12H4Z" fill="#5fb944" /><path d="M12 0H18.500A2.500 2.500 0 0 1 21 2.500V6H12Z" fill="#b5e86b" /><rect x="12" y="6" width="9" height="7" fill="#4fbb47" /><rect x="0" y="10" width="10" height="11" rx="1.500" fill="#0f6b35" /><path d="M3 12.700L7 18.300M7 12.700L3 18.300" stroke="#fff" strokeWidth="1.400" /></svg></Cell>
      </div>
      <div className="ml-auto flex shrink-0 items-center pr-[19px]">
        <svg width="10" height="6" viewBox="0 0 10 6" fill="none" stroke="#fff" strokeWidth="1.4"><path d="M.6 5.300L5 1L9.400 5.300" /></svg>
        <svg className="ml-[18px]" width="18" height="18" viewBox="0 0 18 18" fill="none" stroke="#fff" strokeWidth="1.200"><path d="M2 7A6.500 6.500 0 0 1 14.500 5.500M15 1.500V5.700H11M7 16.500C4.500 16 2.800 14.500 2 12M1.500 16V11.700H5.500" /><circle cx="12.600" cy="13" r="4.200" fill="#f7940a" stroke="none" /></svg>
        <svg className="ml-[17px]" width="12" height="18" viewBox="0 0 12 18" fill="none" stroke="#8fd6ee" strokeWidth="1.200"><rect x="3.500" y="1" width="5" height="10.500" rx="2.500" fill="#3a83a0" /><path d="M1 8.500A5 5 0 0 0 11 8.500M6 13.500V17" stroke="#d8e7ec" /></svg>
        <div className="ml-4 w-[32px] text-center text-[12px] leading-4 tracking-[-0.3px]">ENG<br />IN</div>
        <svg className="ml-[14px]" width="16" height="13" viewBox="0 0 16 13" fill="none" stroke="#fff" strokeWidth="1.200"><path d="M1 4.600A10 10 0 0 1 15 4.600M3.200 7A6.800 6.800 0 0 1 12.800 7M5.400 9.300A3.800 3.800 0 0 1 10.600 9.300" /><circle cx="8" cy="11.300" r="1.300" fill="#fff" stroke="none" /></svg>
        <svg className="ml-2" width="17" height="14" viewBox="0 0 17 14" fill="none" stroke="#fff" strokeWidth="1.100"><path d="M1 5H3.500L7 1.500V12.500L3.500 9H1Z" /><path d="M9 5A3 3 0 0 1 9 9M11 3.200A6 6 0 0 1 11 10.800M13.200 1.300A9 9 0 0 1 13.200 12.700" /></svg>
        <svg className="ml-2" width="16" height="10" viewBox="0 0 16 10" fill="none" stroke="#fff" strokeWidth="1.200"><rect x=".6" y=".6" width="12.800" height="8.800" rx="1.800" /><rect x="2.400" y="2.500" width="3" height="5" fill="#fff" stroke="none" /><path d="M14.800 3.300V6.700" strokeWidth="1.600" /></svg>
        <div className="ml-[15px] w-[63px] text-right text-[12px] leading-4 tracking-[-0.1px] whitespace-nowrap">11:50<br />30-10-2025</div>
      </div>
    </div>
  );
}

export default function App() {
  return (
    <div className="flex h-[768px] w-[1366px] flex-col overflow-hidden font-['Open_Sans','Noto_Sans',sans-serif]">
      <TabStrip />
      <Toolbar />
      <div className="relative flex h-[633px] shrink-0 font-['Inter',sans-serif]">
        <Sidebar />
        <AppMain />
        <Dialog />
      </div>
      <Taskbar />
    </div>
  );
}
